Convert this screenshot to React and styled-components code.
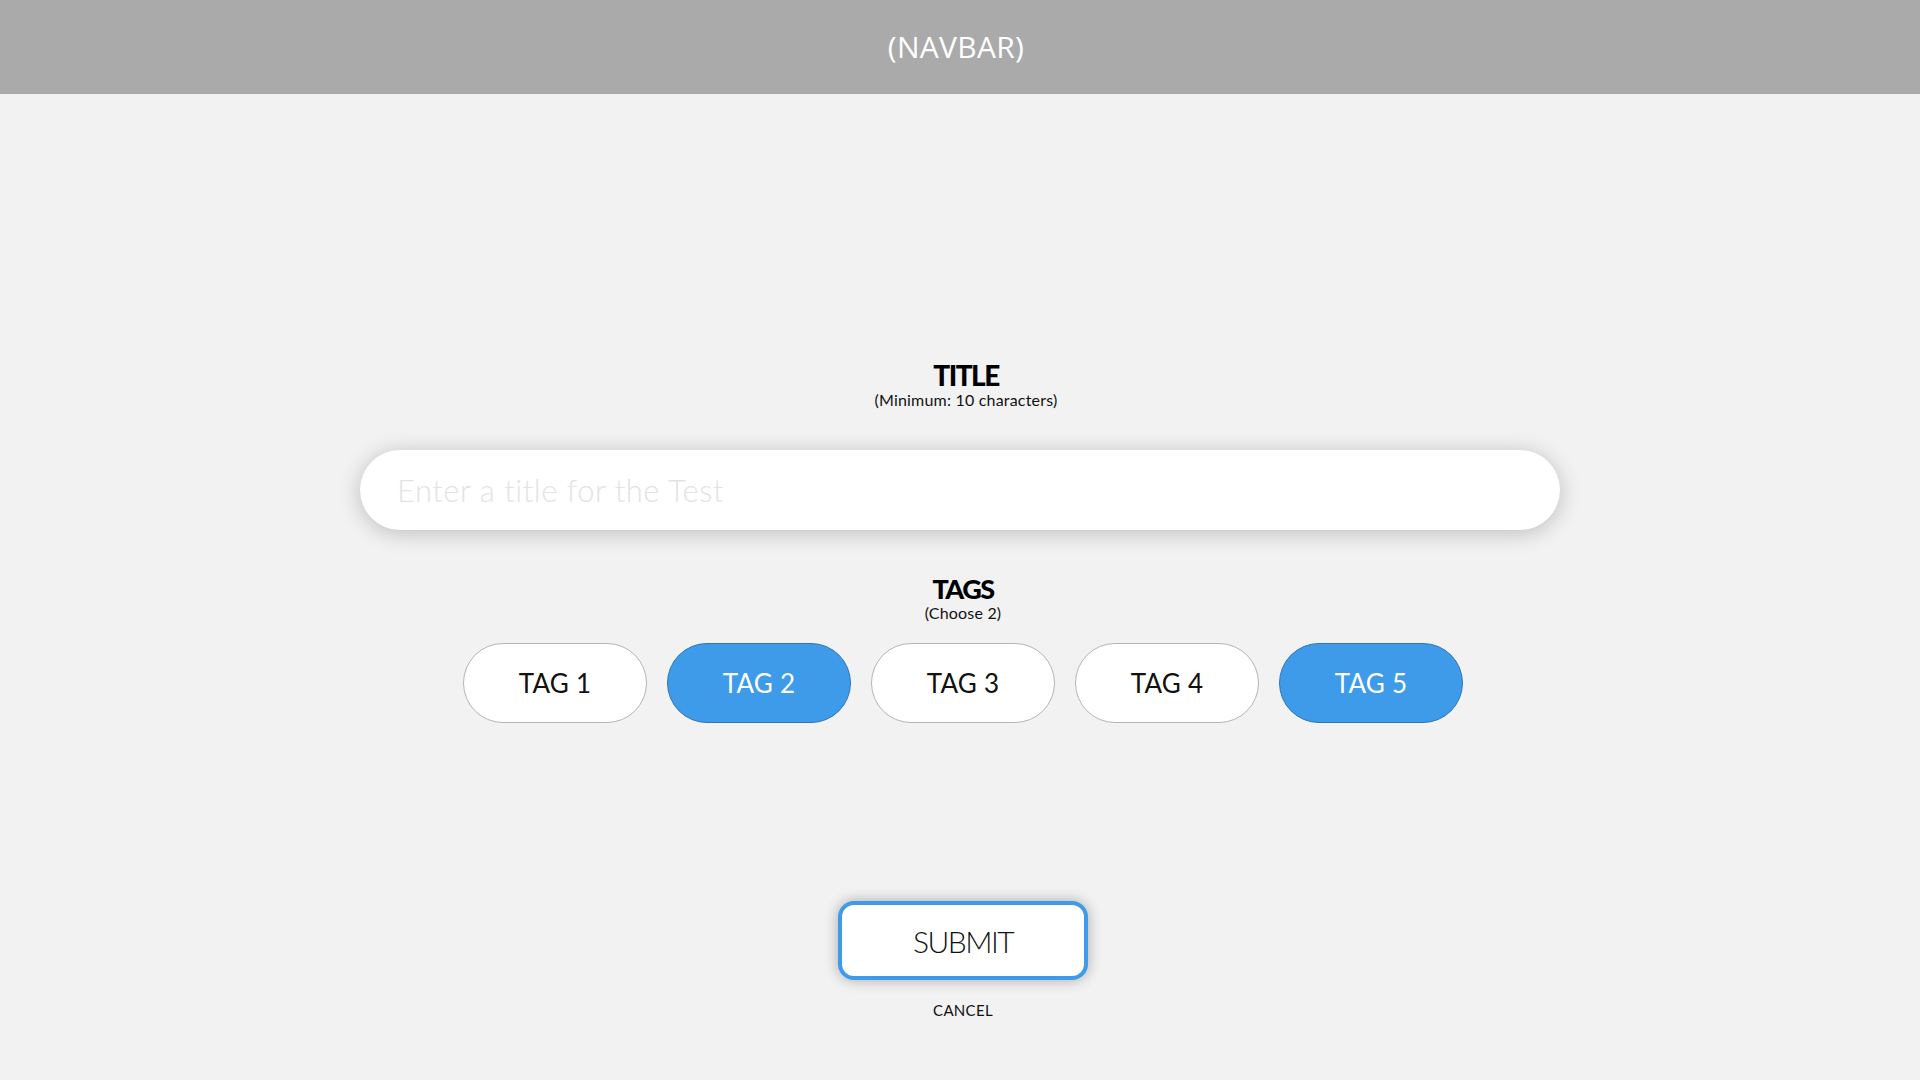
import React, { useState } from "react";
import styled, { createGlobalStyle } from "styled-components";

const Global = createGlobalStyle`
  html, body { margin: 0; padding: 0; background: #f2f2f2; }
  body { font-family: Lato, "Open Sans", sans-serif; color: #000; }
  * { box-sizing: border-box; }
`;

const Page = styled.div`
  min-height: 100vh;
  display: flex;
  flex-direction: column;
`;

const Navbar = styled.header`
  height: 94px;
  background: #aaaaaa;
  display: flex;
  align-items: center;
  justify-content: center;
  padding: 0 8px 2px 0;
`;

const NavText = styled.span`
  font-family: "Open Sans", sans-serif;
  font-size: 30px;
  color: #ffffff;
  letter-spacing: 0.3px;
`;

const Main = styled.main`
  display: flex;
  flex-direction: column;
  align-items: center;
  padding-top: 268px;
`;

const Heading = styled.h2`
  margin: ${(p) => p.$mt || 0}px 0 0 ${(p) => p.$ml || 0}px;
  font-family: Lato, sans-serif;
  font-weight: 900;
  font-size: ${(p) => p.$size}px;
  line-height: ${(p) => p.$lh}px;
  letter-spacing: -1.5px;
`;

const Sub = styled.div`
  margin: ${(p) => p.$mt}px 0 0 ${(p) => p.$ml || 0}px;
  font-family: Lato, sans-serif;
  font-size: 16px;
  line-height: 19px;
  color: #111;
  letter-spacing: 0.2px;
`;

const TitleInput = styled.input`
  margin-top: 41px;
  width: 1200px;
  height: 80px;
  border: none;
  border-radius: 40px;
  background: #fff;
  box-shadow: 0 3px 22px rgba(0, 0, 0, 0.22);
  padding: 0 37px;
  font-family: Lato, sans-serif;
  font-weight: 300;
  font-size: 31px;
  letter-spacing: 0.5px;
  color: #333;
  outline: none;
  &::placeholder { color: #e3e3e3; }
`;

const TagRow = styled.div`
  margin: 21px 0 0 6px;
  display: flex;
  gap: 20px;
`;

const Tag = styled.button`
  width: 184px;
  height: 80px;
  border-radius: 40px;
  border: 1px solid ${(p) => (p.$active ? "#2d75b8" : "#b5b5b5")};
  background: ${(p) => (p.$active ? "#3d9be9" : "#ffffff")};
  color: ${(p) => (p.$active ? "#ffffff" : "#111111")};
  font-family: Lato, sans-serif;
  font-size: 26px;
  letter-spacing: 0.2px;
  padding: 0;
  cursor: pointer;
`;

const Submit = styled.button`
  margin: 178px 0 0 6px;
  width: 250px;
  height: 79px;
  border: 4px solid #3d9be9;
  border-radius: 16px;
  background: #fff;
  box-shadow: 0 0 14px rgba(0, 0, 0, 0.3);
  font-family: Lato, sans-serif;
  font-weight: 300;
  font-size: 30px;
  color: #111;
  letter-spacing: -1.5px;
  cursor: pointer;
`;

const Cancel = styled.button`
  margin: 21px 0 0 6px;
  border: none;
  background: none;
  padding: 0;
  font-family: Lato, sans-serif;
  font-size: 15px;
  line-height: 18px;
  color: #111;
  letter-spacing: 0.3px;
  cursor: pointer;
`;

export default function App() {
  const [active, setActive] = useState([2, 5]);
  const toggle = (n) =>
    setActive((a) => (a.includes(n) ? a.filter((x) => x !== n) : [...a, n]));
  return (
    <Page>
      <Global />
      <Navbar>
        <NavText>(NAVBAR)</NavText>
      </Navbar>
      <Main>
        <Heading $size={28} $lh={26} $ml={12}>TITLE</Heading>
        <Sub $mt={2} $ml={12}>(Minimum: 10 characters)</Sub>
        <TitleInput placeholder="Enter a title for the Test" />
        <Heading $size={27} $lh={27} $mt={45} $ml={6}>TAGS</Heading>
        <Sub $mt={1} $ml={6}>(Choose 2)</Sub>
        <TagRow>
          {[1, 2, 3, 4, 5].map((n) => (
            <Tag key={n} $active={active.includes(n)} onClick={() => toggle(n)}>
              TAG {n}
            </Tag>
          ))}
        </TagRow>
        <Submit>SUBMIT</Submit>
        <Cancel>CANCEL</Cancel>
      </Main>
    </Page>
  );
}
